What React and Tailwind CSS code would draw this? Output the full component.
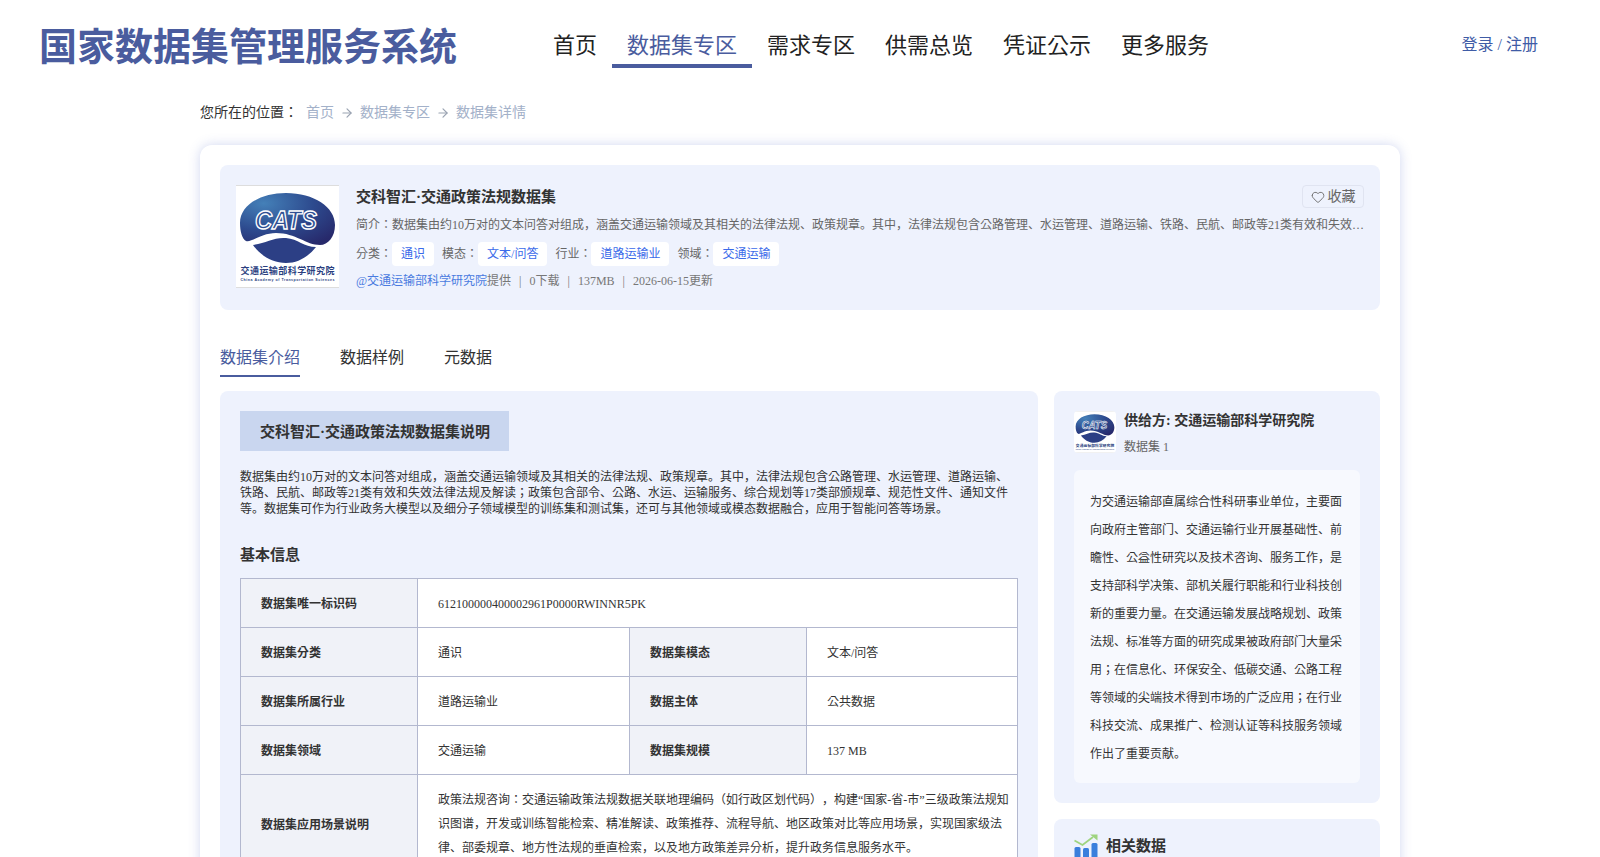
import { ArrowRight, Heart } from 'lucide-react'

const NAV = ['首页', '数据集专区', '需求专区', '供需总览', '凭证公示', '更多服务']

const TAGS = [
  { label: '分类：', value: '通识' },
  { label: '模态：', value: '文本/问答' },
  { label: '行业：', value: '道路运输业' },
  { label: '领域：', value: '交通运输' },
]

const ROWS = [
  ['数据集分类', '通识', '数据集模态', '文本/问答'],
  ['数据集所属行业', '道路运输业', '数据主体', '公共数据'],
  ['数据集领域', '交通运输', '数据集规模', '137 MB'],
]

function Logo({ className, id }) {
  return (
    <svg viewBox="0 0 103 103" className={className}>
      <defs>
        <radialGradient id={id} cx="0.25" cy="0.2" r="0.95">
          <stop offset="0" stopColor="#4480b8" />
          <stop offset="0.55" stopColor="#2d4a8e" />
          <stop offset="1" stopColor="#27296b" />
        </radialGradient>
      </defs>
      <rect width="103" height="103" fill="#fff" />
      <rect width="103" height="1" fill="#ddd" />
      <rect y="102" width="103" height="1" fill="#ddd" />
      <path d="M4 38C4 20 25 8 50 8c28 0 49 14 49 32 0 12-7 20-15 20-14 0-24-12-44-12-15 0-25 10-30 8-4-2-6-10-6-18z" fill={`url(#${id})`} />
      <path d="M17 60c13-2 21-8 33-7 12 1 18 9 30 9-8 10-18 16-30 16-14 0-26-8-33-18z" fill="#2c3f85" />
      <text x="50" y="44" textAnchor="middle" fontFamily="Liberation Sans" fontStyle="italic" fontWeight="700" fontSize="26" textLength="62" lengthAdjust="spacingAndGlyphs" fill="#2f4f92" stroke="#fff" strokeWidth="1.4">CATS</text>
      <text x="51.5" y="89" textAnchor="middle" fontFamily="Noto Sans CJK SC" fontWeight="700" fontSize="9" textLength="94" fill="#2b3f7f">交通运输部科学研究院</text>
      <text x="51.5" y="96" textAnchor="middle" fontFamily="Liberation Sans" fontWeight="700" fontSize="3.6" textLength="94" fill="#2b3f7f">China Academy of Transportation Sciences</text>
    </svg>
  )
}

function Label({ children }) {
  return <td className="bg-[#f0f2f8] border border-[#b3b8cf] px-5 pt-[2px] font-bold text-[#333]">{children}</td>
}

function Value({ children, ...rest }) {
  return <td {...rest} className="border border-[#b3b8cf] px-5 pt-[2px] bg-white text-[#333]">{children}</td>
}

export default function App() {
  return (
    <div className="h-screen overflow-hidden bg-white text-[#333] [text-spacing-trim:space-all] font-['Liberation_Serif','Noto_Sans_CJK_KR',serif]">
      {/* header */}
      <header className="flex items-center h-[90px] pl-[39px] pr-[62px]">
        <h1 className="pt-[3px] text-[38px] leading-[46px] font-bold text-[#4a5c9e] whitespace-nowrap">国家数据集管理服务系统</h1>
        <nav className="flex ml-[81px]">
          {NAV.map((item, i) => (
            <a key={item} className={`h-[46px] px-[15px] text-[22px] leading-[48px] border-b-4 ${i === 1 ? 'text-[#4a5c9e] border-[#4a5c9e]' : 'text-[#222] border-transparent'}`}>{item}</a>
          ))}
        </nav>
        <a className="ml-auto text-base text-[#3f5ca6]">登录 / 注册</a>
      </header>

      <div className="w-[1200px] mx-auto">
        {/* breadcrumb */}
        <div className="flex items-center h-[46px] text-sm text-[#333]">
          <span className="w-[106px]">您所在的位置：</span>
          <span className="text-[#a3b1c9]">首页</span>
          <ArrowRight size={14} className="mx-[6px] text-[#9aa3b2]" />
          <span className="text-[#a3b1c9]">数据集专区</span>
          <ArrowRight size={14} className="mx-[6px] text-[#9aa3b2]" />
          <span className="text-[#a3b1c9]">数据集详情</span>
        </div>

        <div className="mt-[9px] p-5 bg-white rounded-xl shadow-[0_0_12px_rgba(90,110,200,0.28)]">
          {/* dataset summary */}
          <div className="flex gap-[17px] h-[145px] bg-[#eef2fd] rounded-lg px-4 py-5">
            <Logo id="logoLarge" className="w-[103px] h-[103px] shrink-0" />
            <div className="flex-1 min-w-0">
              <div className="flex items-center justify-between h-[23px]">
                <h2 className="pt-[2px] text-[15px] font-bold text-[#333]">交科智汇·交通政策法规数据集</h2>
                <button className="flex items-center gap-[3px] h-[23px] w-[62px] justify-center border border-[#e0e4f1] rounded text-sm text-[#666]">
                  <Heart size={14} strokeWidth={1.5} />收藏
                </button>
              </div>
              <p className="mt-[7px] -mr-[2px] text-xs leading-5 text-[#666] truncate">简介：数据集由约10万对的文本问答对组成，涵盖交通运输领域及其相关的法律法规、政策规章。其中，法律法规包含公路管理、水运管理、道路运输、铁路、民航、邮政等21类有效和失效法律法规及解读；政策包含部令、公路、水运、运输服务、综合规划等17类部颁规章、规范性文件、通知文件等。</p>
              <div className="flex items-center gap-2 mt-[7px] text-xs text-[#666]">
                {TAGS.map(t => (
                  <div key={t.label} className="flex items-center">
                    <span>{t.label}</span>
                    <span className="h-6 px-[9px] leading-6 bg-white rounded text-[#3b6bea]">{t.value}</span>
                  </div>
                ))}
              </div>
              <p className="mt-[5px] text-xs leading-5 text-[#777]">
                <a className="text-[#4a7be0]">@交通运输部科学研究院</a>提供<span className="mx-2">|</span>0下载<span className="mx-2">|</span>137MB<span className="mx-2">|</span>2026-06-15更新
              </p>
            </div>
          </div>

          {/* tabs */}
          <div className="flex gap-10 mt-[35px] text-base leading-6">
            <a className="pt-px pb-[5px] border-b-2 border-[#4a5c9e] text-[#4a5c9e]">数据集介绍</a>
            <a className="pt-px pb-[5px] text-[#333]">数据样例</a>
            <a className="pt-px pb-[5px] text-[#333]">元数据</a>
          </div>

          <div className="flex gap-4 mt-[14px] items-start">
            {/* intro */}
            <div className="w-[818px] shrink-0 bg-[#eef2fd] rounded-lg p-5 pb-8">
              <div className="inline-block h-10 pl-5 pr-[19px] leading-[42px] bg-[#c9d6ef] text-[15px] font-bold text-[#333]">交科智汇·交通政策法规数据集说明</div>
              <p className="mt-[18px] text-xs leading-4 text-[#333]">数据集由约10万对的文本问答对组成，涵盖交通运输领域及其相关的法律法规、政策规章。其中，法律法规包含公路管理、水运管理、道路运输、铁路、民航、邮政等21类有效和失效法律法规及解读；政策包含部令、公路、水运、运输服务、综合规划等17类部颁规章、规范性文件、通知文件等。数据集可作为行业政务大模型以及细分子领域模型的训练集和测试集，还可与其他领域或模态数据融合，应用于智能问答等场景。</p>
              <h3 className="mt-7 text-[15px] leading-5 font-bold text-[#333]">基本信息</h3>
              <table className="mt-[13px] w-[777px] table-fixed border-collapse text-xs">
                <colgroup>
                  <col className="w-[177px]" />
                  <col className="w-[212px]" />
                  <col className="w-[177px]" />
                  <col className="w-[211px]" />
                </colgroup>
                <tbody>
                  <tr className="h-[49px]">
                    <Label>数据集唯一标识码</Label>
                    <Value colSpan={3}>612100000400002961P0000RWINNR5PK</Value>
                  </tr>
                  {ROWS.map(r => (
                    <tr key={r[0]} className="h-[49px]">
                      <Label>{r[0]}</Label>
                      <Value>{r[1]}</Value>
                      <Label>{r[2]}</Label>
                      <Value>{r[3]}</Value>
                    </tr>
                  ))}
                  <tr>
                    <Label>数据集应用场景说明</Label>
                    <td colSpan={3} className="border border-[#b3b8cf] pl-5 pr-2 pt-[13px] pb-3 bg-white leading-6 text-[#333]">政策法规咨询：交通运输政策法规数据关联地理编码（如行政区划代码），构建“国家-省-市”三级政策法规知识图谱，开发或训练智能检索、精准解读、政策推荐、流程导航、地区政策对比等应用场景，实现国家级法律、部委规章、地方性法规的垂直检索，以及地方政策差异分析，提升政务信息服务水平。</td>
                  </tr>
                </tbody>
              </table>
            </div>

            {/* sidebar */}
            <div className="flex-1 min-w-0 flex flex-col gap-4">
              <div className="bg-[#eef2fd] rounded-lg p-5">
                <div className="flex gap-2 h-[42px]">
                  <Logo id="logoSmall" className="w-[42px] h-[42px] rounded" />
                  <div>
                    <div className="text-sm leading-5 font-bold text-[#333]">供给方: 交通运输部科学研究院</div>
                    <div className="mt-2 text-xs leading-4 text-[#666]">数据集 1</div>
                  </div>
                </div>
                <div className="mt-[17px] px-4 pt-[18px] pb-[15px] bg-[#f7f9fe] rounded-md text-xs leading-7 text-[#333]">为交通运输部直属综合性科研事业单位，主要面向政府主管部门、交通运输行业开展基础性、前瞻性、公益性研究以及技术咨询、服务工作，是支持部科学决策、部机关履行职能和行业科技创新的重要力量。在交通运输发展战略规划、政策法规、标准等方面的研究成果被政府部门大量采用；在信息化、环保安全、低碳交通、公路工程等领域的尖端技术得到市场的广泛应用；在行业科技交流、成果推广、检测认证等科技服务领域作出了重要贡献。</div>
              </div>
              <div className="bg-[#eef2fd] rounded-lg px-5 pt-[15px] h-[120px]">
                <div className="flex items-center gap-2 h-6">
                  <svg viewBox="0 0 24 24" className="w-6 h-6 shrink-0">
                    <path d="M0.5 6.5l8 4.5L19 3" fill="none" stroke="#9ed47f" strokeWidth="1.8" />
                    <path d="M16 0.5h7.5v6z" fill="#9ed47f" />
                    <rect x="0.5" y="13" width="6" height="11" rx="1.5" fill="#3a7fdc" />
                    <rect x="9" y="14" width="6" height="10" rx="1.5" fill="#3a7fdc" />
                    <rect x="17.5" y="9" width="6" height="15" rx="1.5" fill="#3a7fdc" />
                  </svg>
                  <span className="text-[15px] font-bold text-[#333]">相关数据</span>
                </div>
              </div>
            </div>
          </div>
        </div>
      </div>
    </div>
  )
}
